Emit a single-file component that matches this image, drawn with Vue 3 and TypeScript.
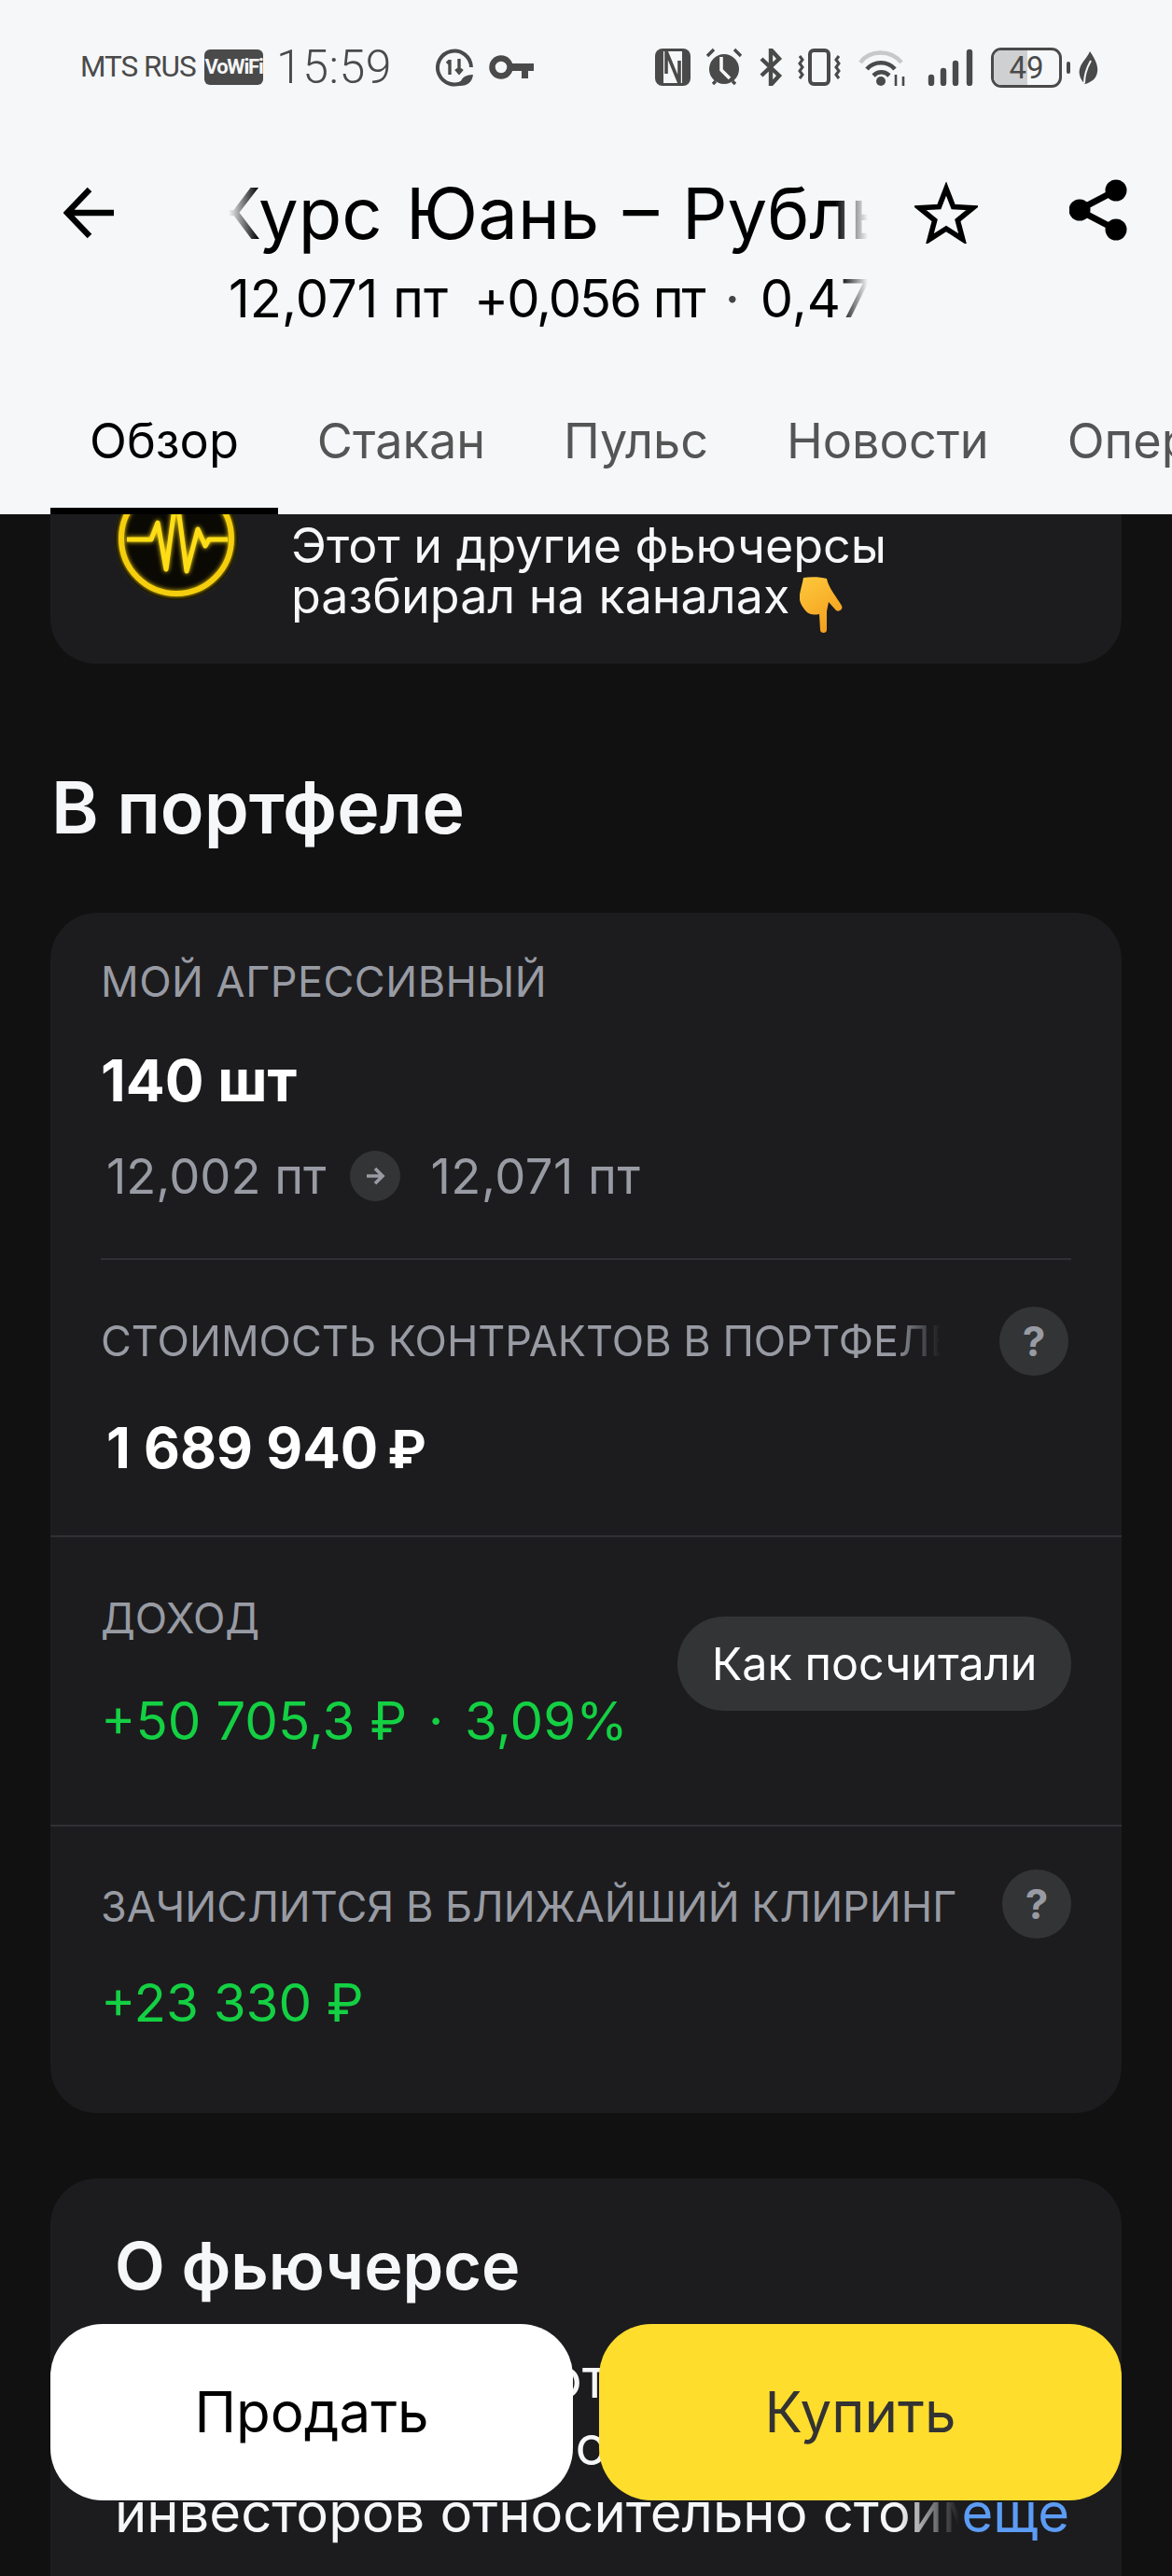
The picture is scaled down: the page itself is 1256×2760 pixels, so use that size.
<script setup lang="ts">
interface Tab { label: string; active?: boolean }
const tabs: Tab[] = [
  { label: 'Обзор', active: true },
  { label: 'Стакан' },
  { label: 'Пульс' },
  { label: 'Новости' },
  { label: 'Операции' },
]
</script>

<template>
  <div class="screen">
    <header class="top">
      <div class="status">
        <span class="carrier">MTS RUS</span>
        <span class="vowifi">VoWiFi</span>
        <span class="clock">15:59</span>
        <svg class="st s-data" viewBox="0 0 42 42" width="42" height="42">
          <path d="M30 36.5A18 18 0 1 1 38 21" fill="none" stroke="#4a4a4a" stroke-width="4"/>
          <path d="M15 14l-3 3M15 13v16M25 12v14M21.5 23l3.500 4 3.500-4" fill="none" stroke="#4a4a4a" stroke-width="3.400"/>
          <path d="M26 41c0-8 5-12 14-12-1 8-6 12-14 12z" fill="#4a4a4a"/>
        </svg>
        <svg class="st s-key" viewBox="0 0 48 28" width="48" height="28">
          <circle cx="13" cy="14" r="9.500" fill="none" stroke="#4a4a4a" stroke-width="6.500"/>
          <path d="M22 10h26v8h-6v8h-7v-8H22z" fill="#4a4a4a"/>
        </svg>
        <span class="spring"></span>
        <svg class="st s-nfc" viewBox="0 0 38 40" width="38" height="40">
          <rect x="0" y="0" width="38" height="40" rx="8" fill="#4a4a4a"/>
          <rect x="9" y="3" width="20" height="34" fill="#f6f7f9"/>
          <path d="M12 3l14 34M12 3v24M26 37V13" fill="none" stroke="#4a4a4a" stroke-width="3.600"/>
        </svg>
        <svg class="st s-alarm" viewBox="0 0 42 42" width="42" height="42">
          <circle cx="21" cy="23" r="16" fill="#4a4a4a"/>
          <path d="M3 9l7-7M39 9l-7-7M9 39l3-3M33 39l-3-3" stroke="#4a4a4a" stroke-width="3.400" fill="none"/>
          <path d="M18 10v14l9 9" fill="none" stroke="#f6f7f9" stroke-width="3.600"/>
        </svg>
        <svg class="st s-bt" viewBox="0 0 26 40" width="26" height="40">
          <path d="M3 11l19 18-9 10V1l9 10L3 29" fill="none" stroke="#4a4a4a" stroke-width="4.400"/>
        </svg>
        <svg class="st s-vib" viewBox="0 0 50 40" width="50" height="40">
          <rect x="15" y="2" width="20" height="36" rx="4" fill="none" stroke="#4a4a4a" stroke-width="4"/>
          <path d="M4 8l3 4-3 4 3 4-3 4 3 4-3 4M46 8l-3 4 3 4-3 4 3 4-3 4 3 4" fill="none" stroke="#4a4a4a" stroke-width="3"/>
        </svg>
        <svg class="st s-wifi" viewBox="0 0 53 40" width="53" height="40">
          <path d="M3 15C13 1 36 1 47 15" fill="none" stroke="#c8c8c8" stroke-width="4.400"/>
          <path d="M10 22c8-9 22-9 30 0M17 29c5-5 12-5 17 0" fill="none" stroke="#4a4a4a" stroke-width="4.600"/>
          <circle cx="25" cy="35" r="5" fill="#4a4a4a"/>
          <path d="M41 40V28M49 40V30" stroke="#4a4a4a" stroke-width="2.600"/>
        </svg>
        <svg class="st s-sig" viewBox="0 0 52 40" width="52" height="40">
          <path d="M4 37V31M17 37V24M30 37V16M45 37V4" stroke="#4a4a4a" stroke-width="6.400" stroke-linecap="round"/>
        </svg>
        <span class="batt"><span class="batt-fill"></span><span class="batt-num">49</span></span>
        <span class="batt-nub"></span>
        <svg class="st s-leaf" viewBox="0 0 21 35" width="21" height="35">
          <path d="M12 0c6 9 9 15 8 22-1 7-6 11-13 13C1 30-1 22 2 16 4 11 9 7 12 0z" fill="#4a4a4a"/>
          <path d="M6 34c0-9 2-15 7-24" stroke="#f6f7f9" stroke-width="2" fill="none"/>
        </svg>
      </div>

      <div class="bar">
        <svg class="ic-back" viewBox="0 0 54 56" width="54" height="56">
          <path d="M28 3L4 28l24 25M5 28h49" fill="none" stroke="#000" stroke-width="6.400"/>
        </svg>
        <div class="heading">
          <div class="title"><span>Курс Юань – Рубль</span></div>
          <div class="sub">
            <span>12,071 пт</span><span class="chg">+0,056 пт</span><span class="dot">·</span><span>0,47%</span>
          </div>
        </div>
        <svg class="ic-star" viewBox="0 0 68 66" width="68" height="66">
          <path d="M34 7l7.600 19.600 21 1.200L46.300 41l5.400 20.400L34 50l-17.700 11.400L21.700 41 5.400 27.800l21-1.200z" fill="none" stroke="#000" stroke-width="5.600" stroke-linejoin="miter"/>
        </svg>
        <svg class="ic-share" viewBox="0 0 62 66" width="62" height="66">
          <path d="M50 12L10 33l40 21" fill="none" stroke="#000" stroke-width="7"/>
          <circle cx="50" cy="12" r="11.500"/><circle cx="11" cy="33" r="11.500"/><circle cx="50" cy="54" r="11.500"/>
        </svg>
      </div>

      <nav class="tabs">
        <div v-for="t in tabs" :key="t.label" class="tab" :class="{ on: t.active }">{{ t.label }}</div>
      </nav>
    </header>

    <main class="feed">
      <section class="promo">
        <svg class="avatar" viewBox="0 0 132 132" width="132" height="132">
          <defs>
            <filter id="glow" x="-20%" y="-20%" width="140%" height="140%">
              <feGaussianBlur stdDeviation="2.500" result="b"/>
              <feMerge><feMergeNode in="b"/><feMergeNode in="SourceGraphic"/></feMerge>
            </filter>
          </defs>
          <circle cx="66" cy="66" r="66" fill="#0a0904"/>
          <g filter="url(#glow)" fill="none" stroke-linejoin="round">
            <circle cx="66" cy="66" r="59" stroke="#f5cf10" stroke-width="6"/>
            <path d="M13 67h26l7 -18 9 50 11 -80 11 82 12 -45 8 18 4 -7h20" stroke="#ffdd14" stroke-width="5"/>
          </g>
        </svg>
        <p class="promo-text">Этот и другие фьючерсы<br>разбирал на каналах<svg class="hand" viewBox="0 0 46 60" width="46" height="60">
          <defs><linearGradient id="hg" x1="0" y1="0" x2="0.500" y2="1"><stop offset="0" stop-color="#ffc93c"/><stop offset="1" stop-color="#f3a01f"/></linearGradient></defs>
          <path d="M4 1C12 0 22 0 29 2c2 10 10 19 16 29 2 4-3 7-6 5l-8-9-2 10v20c0 4-7 4-7 0l-1-17c-6 1-11 1-15-4C1 30-1 25 0 19 1 13 3 7 4 1z" fill="url(#hg)"/>
        </svg></p>
      </section>

      <h2 class="h-port">В портфеле</h2>

      <section class="card pos">
        <div class="inset first">
          <div class="label lbl-a">МОЙ АГРЕССИВНЫЙ</div>
          <div class="qty">140 шт</div>
          <div class="prices">
            <span>12,002 пт</span>
            <span class="arrow">
              <svg viewBox="0 0 22 20" width="22" height="20"><path d="M11 2l8 8-8 8M2 10h16" fill="none" stroke="#989ba3" stroke-width="3.600"/></svg>
            </span>
            <span class="now">12,071 пт</span>
          </div>
        </div>
        <div class="sec sec-b">
          <div class="row-q">
            <div class="label clip">СТОИМОСТЬ КОНТРАКТОВ В ПОРТФЕЛЕ</div>
            <span class="q q-b">?</span>
          </div>
          <div class="sum">1 689 940<span class="rub">₽</span></div>
        </div>
        <div class="sec sec-c">
          <div>
            <div class="label">ДОХОД</div>
            <div class="green g-c">+50 705,3 ₽ <i>·</i> 3,09%</div>
          </div>
          <button class="how" type="button">Как посчитали</button>
        </div>
        <div class="sec sec-d">
          <div class="row-q">
            <div class="label lbl-d">ЗАЧИСЛИТСЯ В БЛИЖАЙШИЙ КЛИРИНГ</div>
            <span class="q">?</span>
          </div>
          <div class="green g-d">+23 330 ₽</div>
        </div>
      </section>

      <section class="card about">
        <h2 class="h-about">О фьючерсе</h2>
        <div class="about-body">
          <p class="para">Цена фьючерса отражает<br>ожидания рынка о настроениях<br>инвесторов относительно стоимости</p>
          <span class="more">еще</span>
        </div>
      </section>
    </main>

    <div class="actions">
      <button class="act sell" type="button">Продать</button>
      <button class="act buy" type="button">Купить</button>
    </div>
  </div>
</template>

<style scoped>
.screen {
  position: relative;
  width: 1256px;
  height: 2760px;
  overflow: hidden;
  background: #111112;
  font-family: Inter, "Noto Sans", sans-serif;
  color: #fff;
}
.top { height: 551px; background: #f6f7f9; overflow: hidden; position: relative; z-index: 2; }

.status { display: flex; align-items: center; height: 40px; padding: 52px 0 0 86px; color: #4a4a4a; }
.carrier { font: 400 31.500px/40px Roboto, sans-serif; width: 133px; white-space: nowrap; letter-spacing: -1px; }
.vowifi { width: 63px; height: 38px; border-radius: 6px; background: #4a4a4a; color: #f6f7f9; font: 700 22px/38px "Roboto", sans-serif; text-align: center; letter-spacing: -1.2px; overflow: hidden; }
.clock { font: 300 50px/40px Roboto, sans-serif; margin-left: 14px; width: 122px; letter-spacing: 0.5px; }
.st { display: block; flex: none; }
.s-data { margin-left: 49px; }
.s-key { margin-left: 15px; }
.spring { flex: 1; }
.s-nfc { margin-right: 15px; }
.s-alarm { margin-right: 16px; }
.s-bt { margin-right: 14px; }
.s-vib { margin-right: 16px; }
.s-wifi { margin-right: 22px; }
.s-sig { margin-right: 16px; }
.batt { position: relative; width: 76px; height: 43px; box-sizing: border-box; border: 3px solid #4a4a4a; border-radius: 11px; overflow: hidden; flex: none; }
.batt-fill { position: absolute; left: 0; top: 0; bottom: 0; width: 36px; background: #cfd0d2; }
.batt-num { position: absolute; inset: 0; text-align: center; font: 400 33px/37px Roboto, sans-serif; color: #4a4a4a; }
.batt-nub { width: 4px; height: 13px; margin-left: 5px; background: #4a4a4a; border-radius: 2px; flex: none; }
.s-leaf { margin-left: 9px; margin-right: 79px; }

.bar { display: flex; align-items: flex-start; height: 210px; margin-top: 100px; position: relative; }
.ic-back { margin: 8px 0 0 68px; flex: none; }
.heading { width: 685px; margin: -8px 0 0 123px; overflow: hidden; flex: none; }
.title {
  font: 400 76px/88px Inter, sans-serif;
  word-spacing: 4px;
  color: #000;
  height: 88px;
  white-space: nowrap;
  overflow: hidden;
  -webkit-mask-image: linear-gradient(90deg, transparent 0, #000 32px, #000 650px, transparent 685px);
  mask-image: linear-gradient(90deg, transparent 0, #000 32px, #000 650px, transparent 685px);
}
.title span { display: inline-block; margin-left: -16px; }
.sub {
  display: flex;
  gap: 28px;
  margin-top: 17px;
  font: 400 56px/62px Inter, sans-serif;
  color: #000;
  white-space: nowrap;
  -webkit-mask-image: linear-gradient(90deg, #000 0, #000 655px, transparent 685px);
  mask-image: linear-gradient(90deg, #000 0, #000 655px, transparent 685px);
}
.sub .chg { letter-spacing: -2px; }
.sub .dot { color: #444; margin: 0 -6px; }
.ic-star { margin: 3px 0 0 50px; flex: none; }
.ic-share { margin: 0 0 0 98px; flex: none; }

.tabs { display: flex; position: absolute; left: 54px; top: 429px; height: 122px; white-space: nowrap; }
.tab { font: 400 52.200px/86px Inter, sans-serif; color: #555; padding: 0 42px; height: 122px; box-sizing: border-box; border-bottom: 7px solid transparent; }
.tab.on { color: #000; border-bottom-color: #000; }

.feed { display: flex; flex-direction: column; padding: 0 54px; }
.promo { display: flex; height: 160px; background: #1c1c1e; border-radius: 0 0 48px 48px; }
.avatar { flex: none; margin: -40px 0 0 69px; }
.promo-text { margin: 7px 0 0 57px; font: 400 52px/54px Inter, sans-serif; color: #f6f7f9; white-space: nowrap; position: relative; }
.hand { position: absolute; margin: 6px 0 0 11px; }

.h-port { margin: 110px 0 0 1px; font: 600 77px/88px Inter, sans-serif; color: #f6f7f9; }
.card { background: #1c1c1e; border-radius: 50px; }
.pos { margin-top: 69px; height: 1286px; }
.label { font: 400 45px/56px Inter, sans-serif; color: #989ba3; white-space: nowrap; }
.lbl-a { letter-spacing: 0.5px; }
.inset { margin: 0 54px; border-bottom: 2px solid #2f3033; }
.first { height: 372px; box-sizing: border-box; padding-top: 46px; }
.qty { margin-top: 42px; font: 700 62px/72px Inter, sans-serif; color: #fff; }
.prices { display: flex; align-items: center; gap: 27px; margin: 39px 0 0 6px; height: 54px; font: 400 52.500px/54px Inter, sans-serif; color: #989ba3; }
.arrow { width: 54px; height: 54px; margin: 0 6px 0 -2px; border-radius: 50%; background: #333436; display: flex; align-items: center; justify-content: center; }
.now { letter-spacing: 0.5px; }
.sec { padding: 0 54px; border-bottom: 2px solid #2f3033; box-sizing: border-box; }
.sec-b { height: 297px; padding-top: 50px; }
.row-q { display: flex; align-items: center; justify-content: space-between; height: 74px; }
.clip { width: 900px; overflow: hidden; -webkit-mask-image: linear-gradient(90deg, #000 850px, transparent 900px); mask-image: linear-gradient(90deg, #000 850px, transparent 900px); }
.q { width: 74px; height: 74px; border-radius: 50%; background: #333436; color: #989ba3; font: 700 44px/74px Inter, sans-serif; text-align: center; flex: none; }
.q-b { margin-right: 3px; }
.sum { margin: 41px 0 0 6px; font: 700 60px/72px Inter, sans-serif; }
.rub { font-size: 56px; margin-left: 10px; }
.sec-c { height: 310px; display: flex; justify-content: space-between; padding-top: 59px; }
.green { color: #14d043; font: 400 56.500px/70px Inter, sans-serif; white-space: nowrap; }
.green i { font-style: normal; margin: 0 7px; }
.g-c { margin-top: 47px; }
.how { height: 101px; width: 422px; margin-top: 26px; border: 0; border-radius: 50px; background: #333436; color: #fff; font: 400 48.500px/101px Inter, sans-serif; padding: 0; }
.sec-d { border-bottom: 0; padding-top: 46px; }
.lbl-d { padding-top: 6px; }
.g-d { margin-top: 34px; }

.about { margin-top: 70px; padding: 52px 56px 0 69px; height: 500px; }
.h-about { margin: 0; font: 600 70px/84px Inter, sans-serif; color: #f6f7f9; }
.about-body { position: relative; margin-top: 42px; }
.para { margin: 0; font: 400 58px/72px Inter, sans-serif; color: #f6f7f9; white-space: nowrap; width: 910px; overflow: hidden; -webkit-mask-image: linear-gradient(90deg, #000 840px, transparent 905px); mask-image: linear-gradient(90deg, #000 840px, transparent 905px); }
.more { position: absolute; right: 0; bottom: 0; font: 400 58px/72px Inter, sans-serif; color: #5c9cf5; }

.actions { position: absolute; left: 54px; top: 2490px; width: 1148px; display: flex; gap: 28px; z-index: 3; }
.act { flex: 1; height: 189px; border: 0; border-radius: 56px; font: 400 60px/189px Inter, sans-serif; padding: 0; }
.sell { background: #fff; color: #000; }
.buy { background: #ffdd2d; color: #333; }
</style>
